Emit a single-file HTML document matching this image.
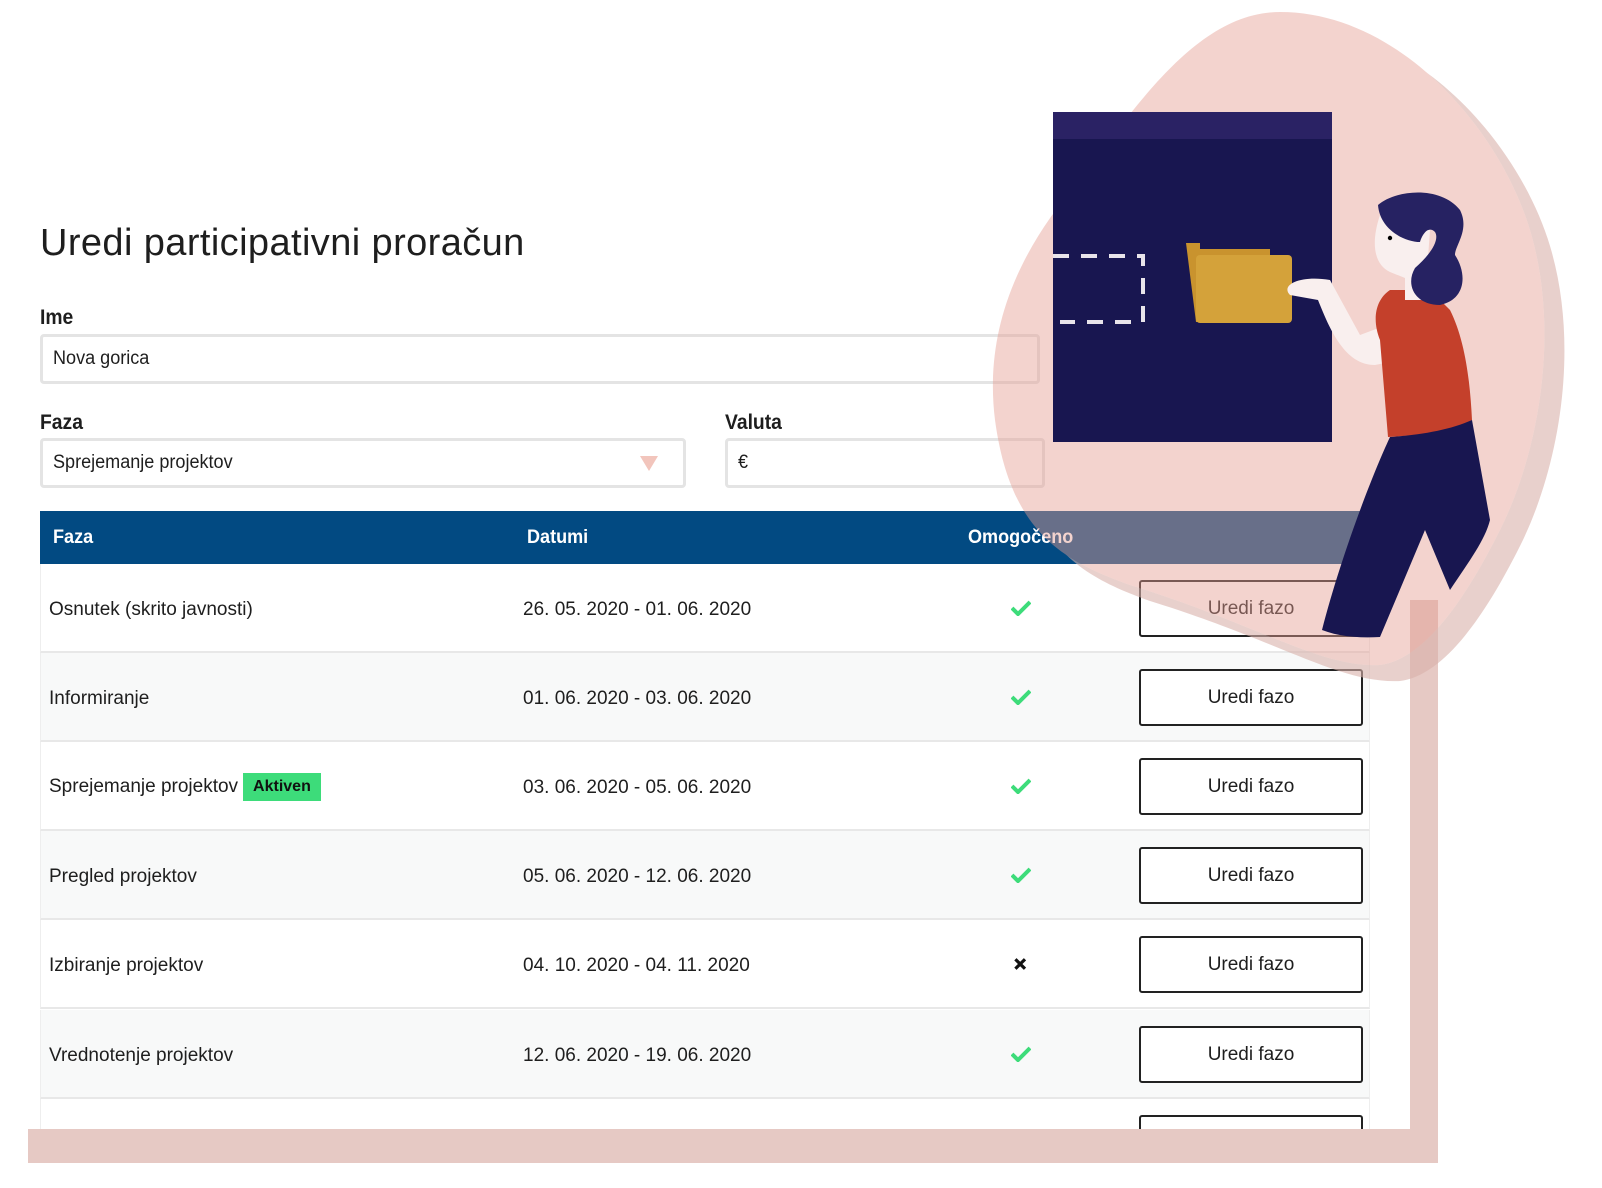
<!DOCTYPE html>
<html><head><meta charset="utf-8">
<style>
*{box-sizing:border-box;margin:0;padding:0}
body{width:1602px;height:1188px;background:#fff;position:relative;overflow:hidden;font-family:"Liberation Sans",sans-serif;color:#1e1e1e}
.abs{position:absolute}
#clip{position:absolute;left:0;top:0;width:1602px;height:1129px;overflow:hidden}
h1{position:absolute;left:40px;top:222px;font-size:38px;font-weight:400;letter-spacing:0.4px}
.lbl{position:absolute;font-size:21px;font-weight:700;transform:scaleX(0.92);transform-origin:left}
.inp{position:absolute;border:3px solid #e4e4e4;border-radius:4px;background:#fff;font-size:19px;padding-left:10px;display:flex;align-items:center}
.inp span{transform:scaleX(0.95);transform-origin:left;display:inline-block}
.tri{position:absolute;width:0;height:0;border-left:9px solid transparent;border-right:9px solid transparent;border-top:15px solid #f2c5bc}
.thead{position:absolute;left:40px;top:511px;width:1330px;height:53px;background:#024a82;color:#fff;font-weight:700;font-size:19px}
.thead div{position:absolute;top:16px;transform:scaleX(0.95);transform-origin:left}
.row{position:absolute;left:40px;width:1330px;height:89px;border-bottom:2px solid #e8e8e8;border-left:1px solid #eee;border-right:1px solid #eee;font-size:19px}
.row .c{position:absolute;top:35px;white-space:nowrap}
.btn{position:absolute;left:1098px;top:16px;width:224px;height:57px;border:2px solid #222;border-radius:3px;background:#fff;display:flex;align-items:center;justify-content:center;font-size:19px}
.ok{position:absolute;left:970px;top:36px;width:20px;height:16px}
.badge{display:inline-block;background:#3ddc7a;color:#111;font-weight:700;font-size:16px;padding:5px 10px;margin-left:5px;vertical-align:middle}
</style></head><body>
<div id="clip">
<h1>Uredi participativni proračun</h1>
<div class="lbl" style="left:40px;top:306px">Ime</div>
<div class="inp" style="left:40px;top:334px;width:1000px;height:50px"><span>Nova gorica</span></div>
<div class="lbl" style="left:40px;top:411px">Faza</div>
<div class="inp" style="left:40px;top:438px;width:646px;height:50px"><span>Sprejemanje projektov</span></div>
<div class="tri" style="left:640px;top:456px"></div>
<div class="lbl" style="left:725px;top:411px">Valuta</div>
<div class="inp" style="left:725px;top:438px;width:320px;height:50px"><span>€</span></div>

<div class="thead"><div style="left:13px">Faza</div><div style="left:487px">Datumi</div><div style="left:928px">Omogočeno</div></div>

<div class="row" style="top:564px;background:#fff"><div class="c" style="left:8px">Osnutek (skrito javnosti)</div><div class="c" style="left:482px">26. 05. 2020 - 01. 06. 2020</div><svg class="ok" viewBox="0 0 20 16"><path d="M1 8l6 6L19 2" stroke="#3ddc7a" stroke-width="4" fill="none"/></svg><div class="btn">Uredi fazo</div></div>
<div class="row" style="top:653px;background:#f8f9f9"><div class="c" style="left:8px">Informiranje</div><div class="c" style="left:482px">01. 06. 2020 - 03. 06. 2020</div><svg class="ok" viewBox="0 0 20 16"><path d="M1 8l6 6L19 2" stroke="#3ddc7a" stroke-width="4" fill="none"/></svg><div class="btn">Uredi fazo</div></div>
<div class="row" style="top:742px;background:#fff"><div class="c" style="left:8px;top:31px">Sprejemanje projektov<span class="badge">Aktiven</span></div><div class="c" style="left:482px">03. 06. 2020 - 05. 06. 2020</div><svg class="ok" viewBox="0 0 20 16"><path d="M1 8l6 6L19 2" stroke="#3ddc7a" stroke-width="4" fill="none"/></svg><div class="btn">Uredi fazo</div></div>
<div class="row" style="top:831px;background:#f8f9f9"><div class="c" style="left:8px">Pregled projektov</div><div class="c" style="left:482px">05. 06. 2020 - 12. 06. 2020</div><svg class="ok" viewBox="0 0 20 16"><path d="M1 8l6 6L19 2" stroke="#3ddc7a" stroke-width="4" fill="none"/></svg><div class="btn">Uredi fazo</div></div>
<div class="row" style="top:920px;background:#fff"><div class="c" style="left:8px">Izbiranje projektov</div><div class="c" style="left:482px">04. 10. 2020 - 04. 11. 2020</div><svg class="ok" viewBox="0 0 20 16" style="left:972px;width:16px"><path d="M3 2l12 12M15 2L3 14" stroke="#111" stroke-width="4" fill="none"/></svg><div class="btn">Uredi fazo</div></div>
<div class="row" style="top:1010px;background:#f8f9f9"><div class="c" style="left:8px">Vrednotenje projektov</div><div class="c" style="left:482px">12. 06. 2020 - 19. 06. 2020</div><svg class="ok" viewBox="0 0 20 16"><path d="M1 8l6 6L19 2" stroke="#3ddc7a" stroke-width="4" fill="none"/></svg><div class="btn">Uredi fazo</div></div>
<div class="row" style="top:1099px;background:#fff"><div class="btn">Uredi fazo</div></div>
</div>

<div class="abs" style="left:1410px;top:600px;width:28px;height:563px;background:#e6c9c4"></div>
<div class="abs" style="left:28px;top:1129px;width:1410px;height:34px;background:#e6c9c4"></div>

<svg class="abs" style="left:0;top:0" width="1602" height="1188" viewBox="0 0 1602 1188">
<defs>
<path id="blob" d="M1280,12 C1400,12 1500,130 1530,230 C1560,330 1540,450 1500,530 C1460,610 1420,660 1380,665 C1320,668 1260,625 1130,585 C1060,560 1010,530 995,420 C985,340 1010,260 1080,180 C1140,100 1200,12 1280,12Z"/>
<mask id="m"><rect width="1602" height="1188" fill="#fff"/><use href="#blob" fill="#000"/></mask>
</defs>
<g mask="url(#m)"><use href="#blob" transform="translate(20,16)" fill="#d9b0aa" fill-opacity="0.6"/></g>
<use href="#blob" fill="rgb(228,157,146)" fill-opacity="0.45"/>
<rect x="1053" y="112" width="279" height="330" fill="#181650"/>
<rect x="1053" y="112" width="279" height="27" fill="#2a2264"/>
<path d="M1053,256 H1143 V322 H1060" stroke="#e8e4ea" stroke-width="4" stroke-dasharray="16 12" fill="none"/>
<path d="M1186,243 h14 v6 h70 v8 h-70 L1200,322 h-4 Z" fill="#c9932e"/>
<rect x="1196" y="255" width="96" height="68" rx="4" fill="#d4a23a"/>
<path d="M1330,280 C1300,275 1280,285 1290,295 L1318,300 C1330,330 1345,365 1375,365 L1425,355 L1400,320 L1360,335 Z" fill="#f9efee"/>
<path d="M1390,290 C1375,300 1372,320 1380,340 L1388,437 C1430,435 1455,430 1472,420 C1470,380 1465,340 1450,310 L1430,290 Z" fill="#c4402b"/>
<path d="M1390,437 C1370,480 1340,560 1322,630 C1340,637 1360,638 1380,637 L1425,530 L1450,590 C1470,560 1485,540 1490,520 L1472,420 C1450,430 1420,435 1390,437 Z" fill="#181650"/>
<path d="M1380,215 C1370,245 1375,265 1390,272 L1405,278 L1405,300 L1425,300 L1430,230 Z" fill="#f9efee"/>
<path d="M1378,205 C1395,190 1440,185 1460,210 C1470,230 1455,245 1455,255 C1468,275 1465,300 1440,305 C1415,305 1405,285 1415,268 C1430,255 1440,240 1435,232 C1428,225 1422,235 1420,242 C1405,242 1380,230 1378,205Z" fill="#262262"/>
<circle cx="1390" cy="238" r="2.2" fill="#000"/>
</svg>
</body></html>
